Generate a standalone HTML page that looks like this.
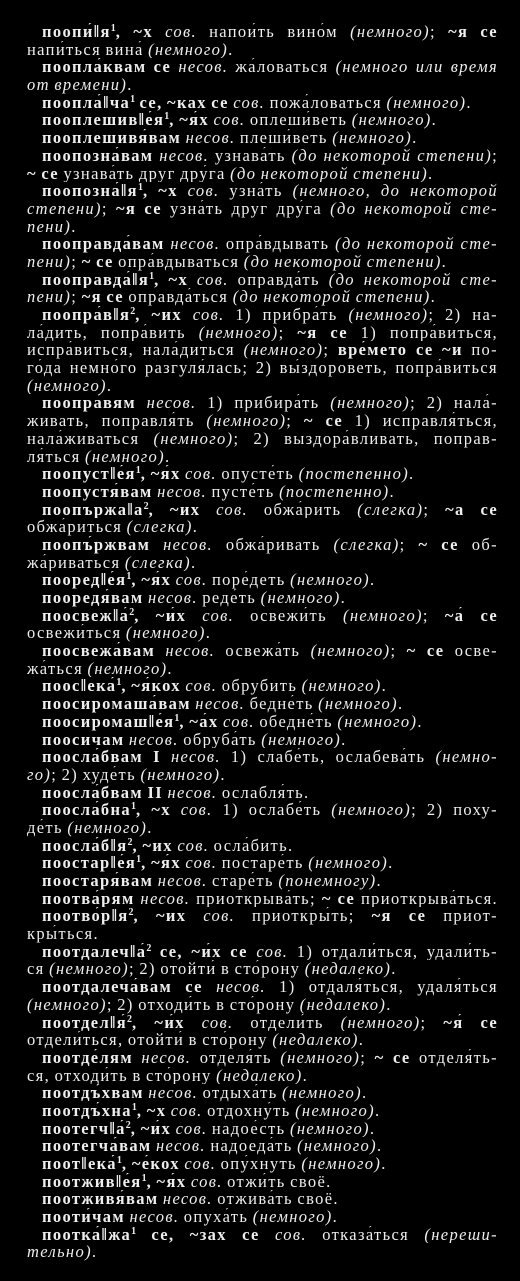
<!DOCTYPE html>
<html><head><meta charset="utf-8"><style>
html,body{margin:0;padding:0;background:#000;}
body{width:520px;height:1281px;overflow:hidden;position:relative;}
#t{position:absolute;left:27px;top:23px;width:471px;color:#eee;font-family:"Liberation Serif","DejaVu Serif",serif;font-size:16.5px;letter-spacing:1.35px;word-spacing:-1px;}
.l{height:17.7px;line-height:17.7px;overflow:hidden;text-align:justify;text-align-last:justify;}
.e{text-align-last:left;}
.h{padding-left:15px;}
b{font-weight:bold;}
i{font-style:italic;}
s{text-decoration:none;font-size:10px;vertical-align:top;line-height:12px;letter-spacing:0;}
</style></head><body><div id="t">
<div class="l h"><b>поопи́‖я<s>1</s>, ~х</b> <i>сов.</i> напои́ть вино́м <i>(немного)</i>; <b>~я се</b></div>
<div class="l e">напи́ться вина́ <i>(немного)</i>.</div>
<div class="l h"><b>поопла́квам се</b> <i>несов.</i> жа́ловаться <i>(немного или время</i></div>
<div class="l e"><i>от времени)</i>.</div>
<div class="l h e"><b>поопла́‖ча<s>1</s> се, ~ках се</b> <i>сов.</i> пожа́ловаться <i>(немного)</i>.</div>
<div class="l h e"><b>пооплешив‖е́я<s>1</s>, ~я́х</b> <i>сов.</i> оплеши́веть <i>(немного)</i>.</div>
<div class="l h e"><b>пооплешивя́вам</b> <i>несов.</i> плеши́веть <i>(немного)</i>.</div>
<div class="l h"><b>поопозна́вам</b> <i>несов.</i> узнава́ть <i>(до некоторой степени)</i>;</div>
<div class="l e"><b>~ се</b> узнава́ть друг дру́га <i>(до некоторой степени)</i>.</div>
<div class="l h"><b>поопозна́‖я<s>1</s>, ~х</b> <i>сов.</i> узна́ть <i>(немного, до некоторой</i></div>
<div class="l"><i>степени)</i>; <b>~я се</b> узна́ть друг дру́га <i>(до некоторой сте-</i></div>
<div class="l e"><i>пени)</i>.</div>
<div class="l h"><b>пооправда́вам</b> <i>несов.</i> опра́вдывать <i>(до некоторой сте-</i></div>
<div class="l e"><i>пени)</i>; <b>~ се</b> опра́вдываться <i>(до некоторой степени)</i>.</div>
<div class="l h"><b>пооправда́‖я<s>1</s>, ~х</b> <i>сов.</i> оправда́ть <i>(до некоторой сте-</i></div>
<div class="l e"><i>пени)</i>; <b>~я се</b> оправда́ться <i>(до некоторой степени)</i>.</div>
<div class="l h"><b>поопра́в‖я<s>2</s>, ~их</b> <i>сов.</i> 1) прибра́ть <i>(немного)</i>; 2) на-</div>
<div class="l">ла́дить, попра́вить <i>(немного)</i>; <b>~я се</b> 1) попра́виться,</div>
<div class="l">испра́виться, нала́диться <i>(немного)</i>; <b>вре́мето се ~и</b> по-</div>
<div class="l">го́да немно́го разгуля́лась; 2) вы́здороветь, попра́виться</div>
<div class="l e"><i>(немного)</i>.</div>
<div class="l h"><b>поопра́вям</b> <i>несов.</i> 1) прибира́ть <i>(немного)</i>; 2) нала́-</div>
<div class="l">живать, поправля́ть <i>(немного)</i>; <b>~ се</b> 1) исправля́ться,</div>
<div class="l">нала́живаться <i>(немного)</i>; 2) выздора́вливать, поправ-</div>
<div class="l e">ля́ться <i>(немного)</i>.</div>
<div class="l h e"><b>поопуст‖е́я<s>1</s>, ~я́х</b> <i>сов.</i> опусте́ть <i>(постепенно)</i>.</div>
<div class="l h e"><b>поопустя́вам</b> <i>несов.</i> пусте́ть <i>(постепенно)</i>.</div>
<div class="l h"><b>поопържа‖а<s>2</s>, ~их</b> <i>сов.</i> обжа́рить <i>(слегка)</i>; <b>~а се</b></div>
<div class="l e">обжа́риться <i>(слегка)</i>.</div>
<div class="l h"><b>поопъ́ржвам</b> <i>несов.</i> обжа́ривать <i>(слегка)</i>; <b>~ се</b> об-</div>
<div class="l e">жа́риваться <i>(слегка)</i>.</div>
<div class="l h e"><b>пооред‖е́я<s>1</s>, ~я́х</b> <i>сов.</i> поре́деть <i>(немного)</i>.</div>
<div class="l h e"><b>пооредя́вам</b> <i>несов.</i> реде́ть <i>(немного)</i>.</div>
<div class="l h"><b>поосвеж‖а́<s>2</s>, ~и́х</b> <i>сов.</i> освежи́ть <i>(немного)</i>; <b>~а́ се</b></div>
<div class="l e">освежи́ться <i>(немного)</i>.</div>
<div class="l h"><b>поосвежа́вам</b> <i>несов.</i> освежа́ть <i>(немного)</i>; <b>~ се</b> осве-</div>
<div class="l e">жа́ться <i>(немного)</i>.</div>
<div class="l h e"><b>поос‖ека́<s>1</s>, ~я́кох</b> <i>сов.</i> обрубить <i>(немного)</i>.</div>
<div class="l h e"><b>поосиромаша́вам</b> <i>несов.</i> бедне́ть <i>(немного)</i>.</div>
<div class="l h e"><b>поосиромаш‖е́я<s>1</s>, ~а́х</b> <i>сов.</i> обедне́ть <i>(немного)</i>.</div>
<div class="l h e"><b>поосичам</b> <i>несов.</i> обруба́ть <i>(немного)</i>.</div>
<div class="l h"><b>поосла́бвам I</b> <i>несов.</i> 1) слабе́ть, ослабева́ть <i>(немно-</i></div>
<div class="l e"><i>го)</i>; 2) худе́ть <i>(немного)</i>.</div>
<div class="l h e"><b>поосла́бвам II</b> <i>несов.</i> ослабля́ть.</div>
<div class="l h"><b>поосла́бна<s>1</s>, ~х</b> <i>сов.</i> 1) ослабе́ть <i>(немного)</i>; 2) поху-</div>
<div class="l e">де́ть <i>(немного)</i>.</div>
<div class="l h e"><b>поосла́б‖я<s>2</s>, ~их</b> <i>сов.</i> осла́бить.</div>
<div class="l h e"><b>поостар‖е́я<s>1</s>, ~я́х</b> <i>сов.</i> постаре́ть <i>(немного)</i>.</div>
<div class="l h e"><b>поостаря́вам</b> <i>несов.</i> старе́ть <i>(понемногу)</i>.</div>
<div class="l h"><b>поотва́рям</b> <i>несов.</i> приоткрыва́ть; <b>~ се</b> приоткрыва́ться.</div>
<div class="l h"><b>поотво́р‖я<s>2</s>, ~их</b> <i>сов.</i> приоткры́ть; <b>~я се</b> приот-</div>
<div class="l e">кры́ться.</div>
<div class="l h"><b>поотдалеч‖а́<s>2</s> се, ~и́х се</b> <i>сов.</i> 1) отдали́ться, удали́ть-</div>
<div class="l e">ся <i>(немного)</i>; 2) отойти́ в сто́рону <i>(недалеко)</i>.</div>
<div class="l h"><b>поотдалеча́вам се</b> <i>несов.</i> 1) отдаля́ться, удаля́ться</div>
<div class="l e"><i>(немного)</i>; 2) отходи́ть в сто́рону <i>(недалеко)</i>.</div>
<div class="l h"><b>поотдел‖я́<s>2</s>, ~и́х</b> <i>сов.</i> отдели́ть <i>(немного)</i>; <b>~я́ се</b></div>
<div class="l e">отдели́ться, отойти́ в сто́рону <i>(недалеко)</i>.</div>
<div class="l h"><b>поотде́лям</b> <i>несов.</i> отделя́ть <i>(немного)</i>; <b>~ се</b> отделя́ть-</div>
<div class="l e">ся, отходи́ть в сто́рону <i>(недалеко)</i>.</div>
<div class="l h e"><b>поотдъ́хвам</b> <i>несов.</i> отдыха́ть <i>(немного)</i>.</div>
<div class="l h e"><b>поотдъ́хна<s>1</s>, ~х</b> <i>сов.</i> отдохну́ть <i>(немного)</i>.</div>
<div class="l h e"><b>поотегч‖а́<s>2</s>, ~и́х</b> <i>сов.</i> надое́сть <i>(немного)</i>.</div>
<div class="l h e"><b>поотегча́вам</b> <i>несов.</i> надоеда́ть <i>(немного)</i>.</div>
<div class="l h e"><b>поот‖ека́<s>1</s>, ~е́кох</b> <i>сов.</i> опу́хнуть <i>(немного)</i>.</div>
<div class="l h e"><b>поотжив‖е́я<s>1</s>, ~я́х</b> <i>сов.</i> отжи́ть своё.</div>
<div class="l h e"><b>поотживя́вам</b> <i>несов.</i> отжива́ть своё.</div>
<div class="l h e"><b>пооти́чам</b> <i>несов.</i> опуха́ть <i>(немного)</i>.</div>
<div class="l h"><b>поотка́‖жа<s>1</s> се, ~зах се</b> <i>сов.</i> отказа́ться <i>(нерешu-</i></div>
<div class="l e"><i>тельно)</i>.</div>
</div></body></html>
